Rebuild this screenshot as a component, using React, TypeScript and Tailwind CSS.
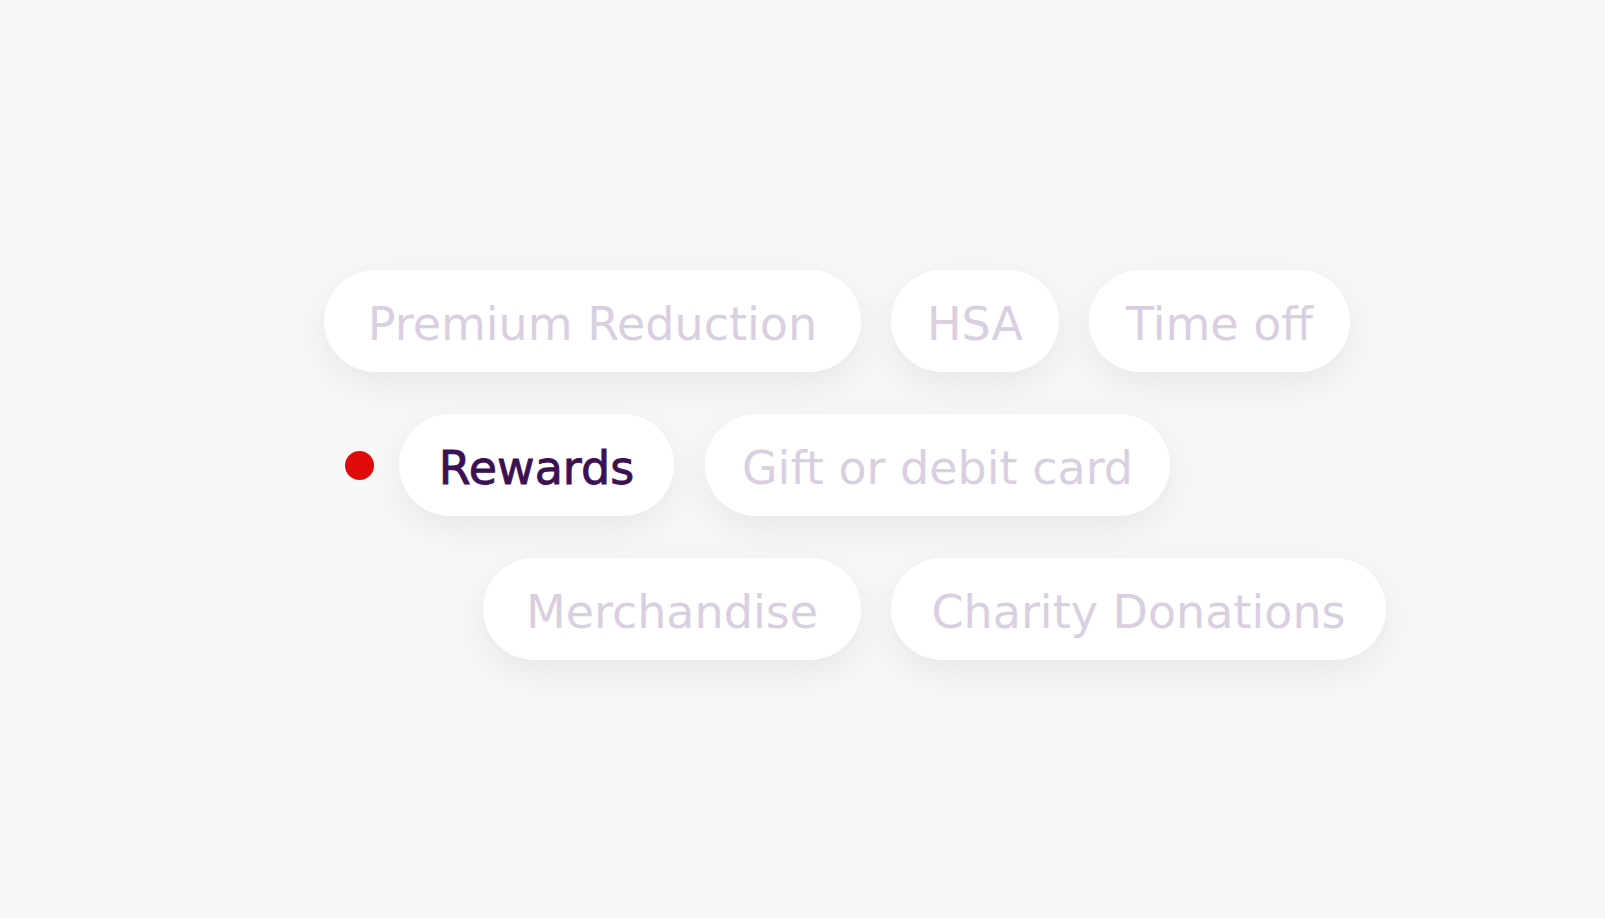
import React from "react";

const pill =
  "flex h-[102px] items-center justify-center rounded-full bg-white text-[46px] leading-none shadow-[0_12px_40px_rgba(0,0,0,0.075)]";

function Pill({ label, w, active = false }: { label: string; w: string; active?: boolean }) {
  return (
    <div className={`${pill} ${w}`}>
      <span
        className={
          active
            ? "pt-[5px] text-[#3c1053] [-webkit-text-stroke:0.9px_#3c1053]"
            : "pt-[5px] text-[#d9cfe1]"
        }
      >
        {label}
      </span>
    </div>
  );
}

export default function App() {
  return (
    <div
      className="min-h-[918px] w-full bg-[#f8f8f8] pt-[270px]"
      style={{ fontFamily: '"DejaVu Sans", "Noto Sans", sans-serif' }}
    >
      <div className="flex flex-col gap-[42px]">
        <div className="ml-[324px] flex gap-[30px]">
          <Pill label="Premium Reduction" w="w-[537px]" />
          <Pill label="HSA" w="w-[168px]" />
          <Pill label="Time off" w="w-[261px]" />
        </div>
        <div className="ml-[345px] flex items-center">
          <div className="mr-[25px] h-[29px] w-[29px] rounded-full bg-[#e10a0a]" />
          <div className="flex gap-[31px]">
            <Pill label="Rewards" w="w-[275px]" active />
            <Pill label="Gift or debit card" w="w-[465px]" />
          </div>
        </div>
        <div className="ml-[483px] flex gap-[30px]">
          <Pill label="Merchandise" w="w-[378px]" />
          <Pill label="Charity Donations" w="w-[495px]" />
        </div>
      </div>
    </div>
  );
}
